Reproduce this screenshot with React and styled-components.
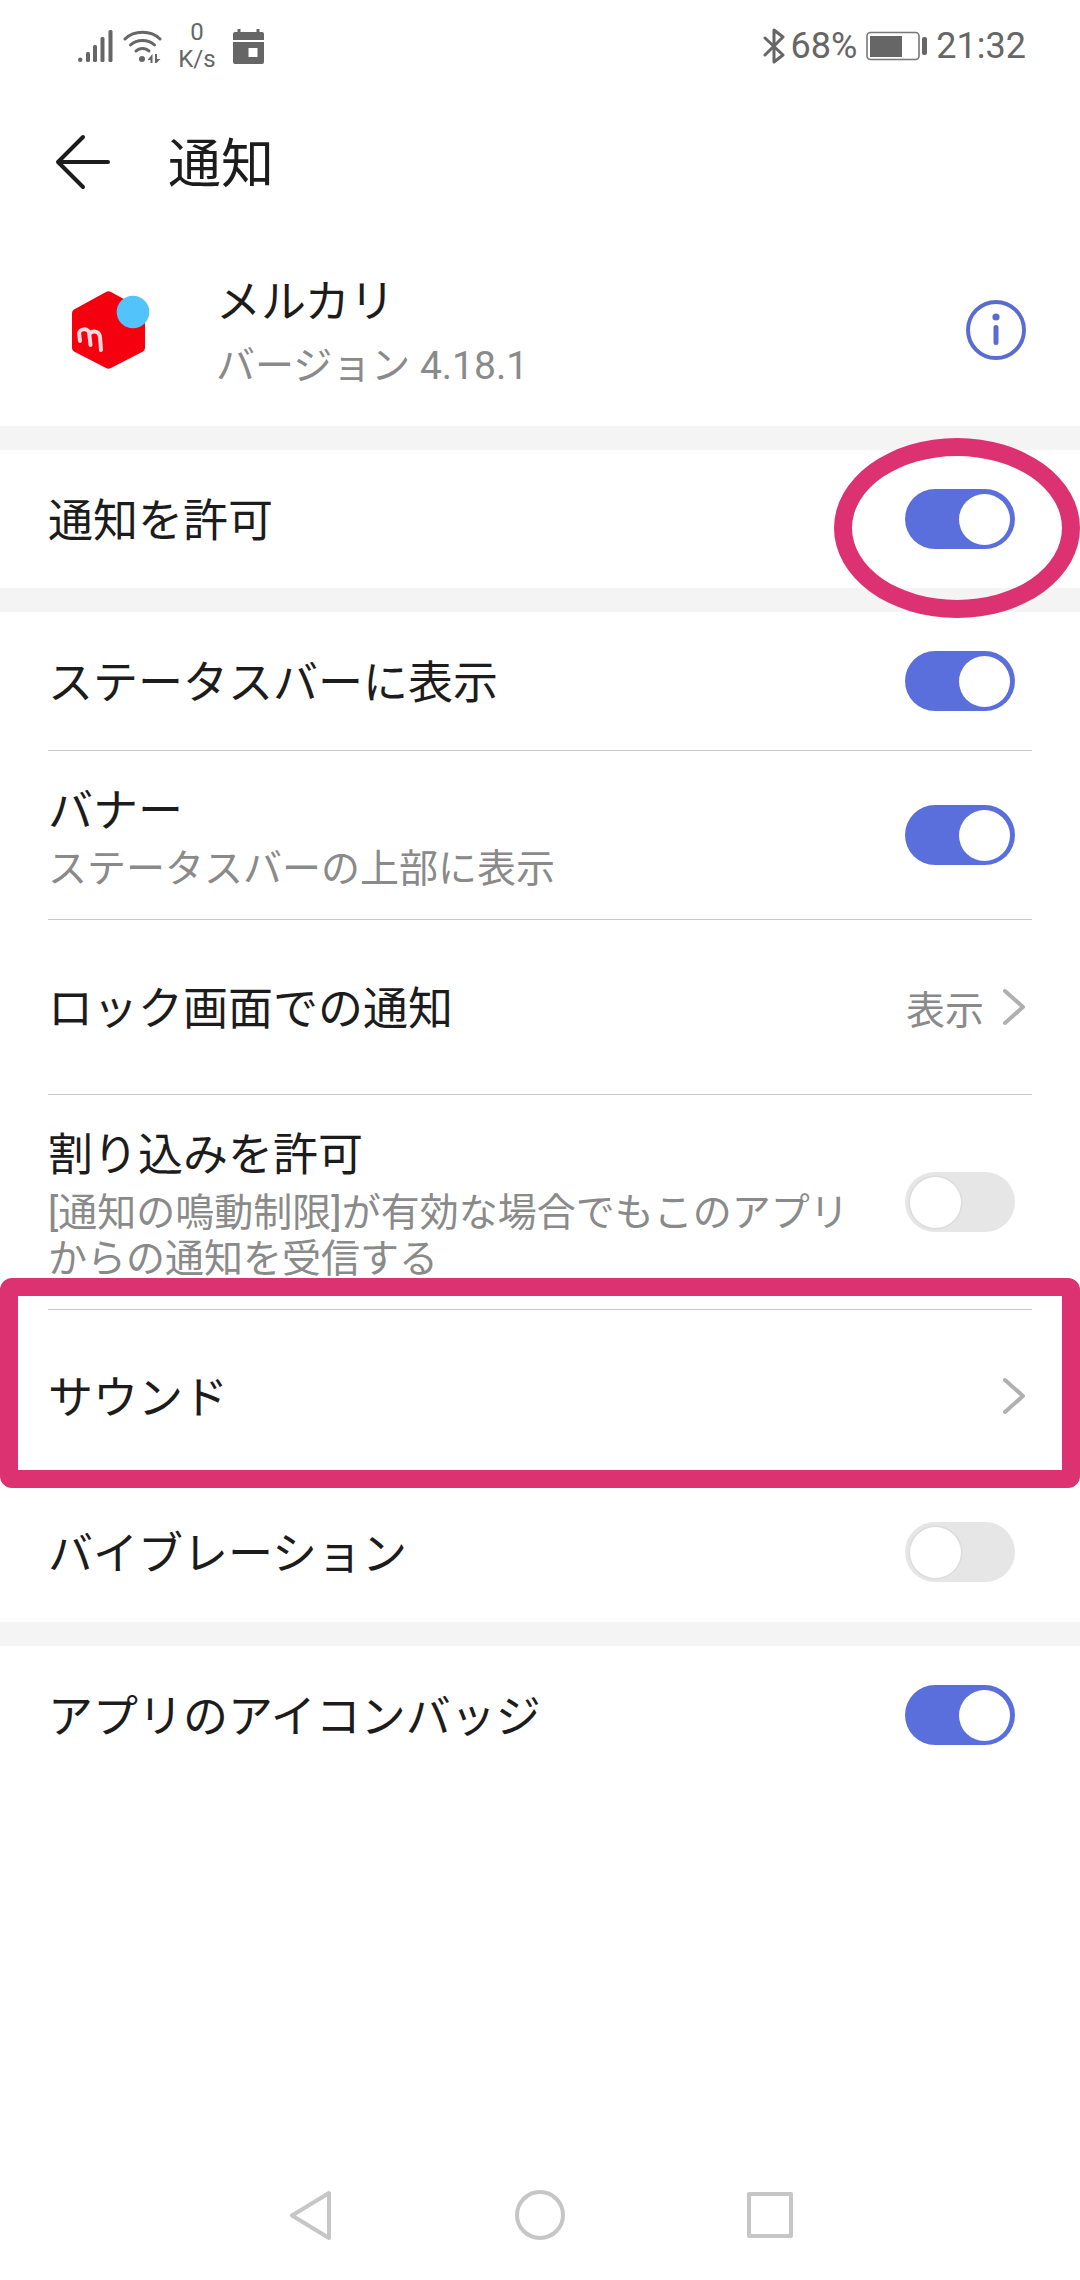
import React from "react";
import styled, { createGlobalStyle } from "styled-components";

const Global = createGlobalStyle`
  html, body { margin: 0; padding: 0; background: #fff; }
  body { font-family: Roboto, "Noto Sans CJK JP", sans-serif; }
`;

const Page = styled.div`
  position: relative;
  width: 1080px;
  height: 2280px;
  overflow: hidden;
  background: #fff;
  display: flex;
  flex-direction: column;
`;

const StatusBar = styled.div`
  height: 80px;
  padding: 12px 54px 0 78px;
  display: flex;
  align-items: center;
  justify-content: space-between;
  box-sizing: border-box;
  flex: none;
`;
const StatusGroup = styled.div`
  display: flex;
  align-items: center;
`;
const WifiWrap = styled.div`
  display: flex;
  margin-left: 10px;
`;
const NetSpeed = styled.div`
  width: 50px;
  margin: 0 11px 0 10px;
  text-align: center;
  font-size: 24px;
  line-height: 27px;
  color: #666;
`;
const Percent = styled.span`
  margin-left: 6px;
  font-size: 36px;
  line-height: 40px;
  color: #666;
`;
const Clock = styled(Percent)`
  margin-left: 9px;
`;
const BatteryWrap = styled.div`
  display: flex;
  margin-left: 9px;
`;

const Toolbar = styled.div`
  height: 164px;
  padding-left: 54px;
  display: flex;
  align-items: center;
  box-sizing: border-box;
  flex: none;
`;
const Title = styled.h1`
  margin: 0 0 0 56px;
  padding-top: 5px;
  font-size: 53px;
  font-weight: 400;
  color: #1c1c1c;
  line-height: 60px;
`;

const AppHeader = styled.div`
  height: 182px;
  padding: 0 54px 10px 72px;
  display: flex;
  align-items: center;
  box-sizing: border-box;
  flex: none;
`;
const AppIcon = styled.div`
  width: 78px;
  height: 78px;
  flex: none;
  margin-right: 66px;
`;
const AppText = styled.div`
  flex: 1;
  padding-top: 4px;
  display: flex;
  flex-direction: column;
  gap: 6px;
`;
const AppName = styled.div`
  font-size: 45px;
  line-height: 62px;
  color: #1c1c1c;
`;
const AppVersion = styled.div`
  font-size: 39px;
  line-height: 52px;
  color: #8a8a8a;
`;

const Band = styled.div`
  height: 24px;
  background: #f4f4f4;
  flex: none;
`;

const Row = styled.div`
  height: ${(p) => p.$h}px;
  padding: 0 48px;
  display: flex;
  align-items: center;
  justify-content: space-between;
  box-sizing: border-box;
  flex: none;
`;
const Divider = styled.div`
  height: 1px;
  margin: 0 48px;
  background: #c8c8c8;
  flex: none;
`;
const RowText = styled.div`
  padding-top: 4px;
  display: flex;
  flex-direction: column;
  gap: 5px;
  width: ${(p) => p.$w || "auto"};
`;
const Label = styled.div`
  font-size: 45px;
  line-height: 58px;
  color: #1c1c1c;
  white-space: nowrap;
`;
const SingleLabel = styled(Label)`
  padding-top: 6px;
`;
const Sub = styled.div`
  font-size: 39px;
  line-height: 46px;
  color: #8a8a8a;
`;
const Track = styled.div`
  width: 110px;
  height: 60px;
  margin-right: 17px;
  border-radius: 30px;
  flex: none;
  box-sizing: border-box;
  padding: 4.5px 5px;
  display: flex;
  justify-content: ${(p) => (p.$on ? "flex-end" : "flex-start")};
  background: ${(p) => (p.$on ? "#5a6fdc" : "#e6e6e6")};
`;
const Knob = styled.div`
  width: 51px;
  height: 51px;
  border-radius: 50%;
  background: #fff;
  box-shadow: ${(p) => (p.$on ? "none" : "0 0 0 1.5px #dcdcdc")};
`;
const Trail = styled.div`
  display: flex;
  align-items: center;
  gap: 18px;
  font-size: 39px;
  color: #8a8a8a;
  margin-right: 4px;
`;

const Spacer = styled.div`
  flex: 1;
`;
const NavBar = styled.div`
  height: 130px;
  display: flex;
  align-items: center;
  justify-content: center;
  box-sizing: border-box;
  flex: none;
`;
const NavSlot = styled.div`
  width: 230px;
  display: flex;
  justify-content: center;
`;

const RingNote = styled.div`
  position: absolute;
  left: 834px;
  top: 438px;
  width: 246px;
  height: 180px;
  box-sizing: border-box;
  border: 18px solid #dc3272;
  border-radius: 50%;
`;
const BoxNote = styled.div`
  position: absolute;
  left: 0;
  top: 1278px;
  width: 1080px;
  height: 210px;
  box-sizing: border-box;
  border: 18px solid #dc3272;
  border-radius: 12px;
`;

const Chevron = () => (
  <svg width="26" height="38" viewBox="0 0 26 38" fill="none">
    <path d="M3 3l18 16L3 35" stroke="#b0b0b0" strokeWidth="4" strokeLinecap="round" strokeLinejoin="round" />
  </svg>
);

const Toggle = ({ on }) => (
  <Track $on={on}>
    <Knob $on={on} />
  </Track>
);

export default function App() {
  return (
    <Page>
      <Global />
      <StatusBar>
        <StatusGroup>
          <svg width="35" height="33" viewBox="0 0 35 33" fill="#666">
            <circle cx="2.2" cy="29.8" r="2.2" />
            <rect x="8" y="22" width="4" height="10" rx="1.5" />
            <rect x="15" y="15" width="4" height="17" rx="1.5" />
            <rect x="22.5" y="7" width="4" height="25" rx="1.5" />
            <rect x="30.5" y="0" width="4" height="32" rx="1.5" />
          </svg>
          <WifiWrap>
            <svg width="39" height="33" viewBox="0 0 39 33" fill="none" stroke="#666" strokeWidth="3" strokeLinecap="round">
              <path d="M2 9C11 0 28 0 37 9" />
              <path d="M7.5 15C14 9 25 9 31.5 15" />
              <path d="M13 21C16.5 17.5 22.500 17.5 26 21" />
              <circle cx="19" cy="29" r="3" fill="#666" stroke="none" />
              <path d="M29.500 24v9h-2v-3h-3zM32 24v9h1.500l4-4h-3.500v-5z" fill="#666" stroke="none" />
            </svg>
          </WifiWrap>
          <NetSpeed>0<br />K/s</NetSpeed>
          <svg width="31" height="35" viewBox="0 0 31 35" fill="#666">
            <path d="M2 3h2.500V0h3v3h16V0h3v3H29a2 2 0 0 1 2 2v6H0V5a2 2 0 0 1 2-2z" />
            <path fillRule="evenodd" d="M0 13h31v20a2 2 0 0 1-2 2H2a2 2 0 0 1-2-2zM15.500 19v9h9v-9z" />
          </svg>
        </StatusGroup>
        <StatusGroup>
          <svg width="22" height="36" viewBox="0 0 22 36" fill="none" stroke="#666" strokeWidth="3" strokeLinecap="round" strokeLinejoin="round">
            <path d="M2 10l18 17-9 7V2l9 7L2 27" />
          </svg>
          <Percent>68%</Percent>
          <BatteryWrap>
            <svg width="61" height="30" viewBox="0 0 61 30" fill="none">
              <rect x="1" y="1.500" width="52" height="27" rx="3.500" stroke="#777" strokeWidth="1.600" />
              <rect x="4" y="5" width="32" height="21" fill="#666" />
              <rect x="56" y="6" width="5" height="18" rx="2" fill="#666" />
            </svg>
          </BatteryWrap>
          <Clock>21:32</Clock>
        </StatusGroup>
      </StatusBar>

      <Toolbar>
        <svg width="58" height="58" viewBox="0 0 58 58" fill="none" stroke="#1c1c1c" strokeWidth="4" strokeLinecap="round" strokeLinejoin="round">
          <path d="M54 29H4M29 4L4 29l25 25" />
        </svg>
        <Title>通知</Title>
      </Toolbar>

      <AppHeader>
        <AppIcon>
          <svg width="78" height="78" viewBox="0 0 78 78">
            <path d="M34 1L2 18.500a4 4 0 0 0-2 3.500V57a4 4 0 0 0 2 3.500L34 77a5 5 0 0 0 5 0l32-16.500a4 4 0 0 0 2-3.500V22a4 4 0 0 0-2-3.500L39 1a5 5 0 0 0-5 0z" fill="#f5000f" />
            <path d="M8 50l-.8-7c-.6-5 8.800-7 10-1l1.300 12M17.500 44c.5-5 9.500-5 10.500 2l1 13" fill="none" stroke="#fff" strokeOpacity=".85" strokeWidth="4" strokeLinecap="round" />
            <circle cx="61" cy="21" r="16.300" fill="#52c3fb" />
          </svg>
        </AppIcon>
        <AppText>
          <AppName>メルカリ</AppName>
          <AppVersion>バージョン 4.18.1</AppVersion>
        </AppText>
        <svg width="60" height="60" viewBox="0 0 60 60" fill="none">
          <circle cx="30" cy="30" r="28" stroke="#5a6ccf" strokeWidth="4" />
          <circle cx="30" cy="17" r="3.600" fill="#5a6ccf" />
          <rect x="27.500" y="25" width="5" height="20" rx="2.500" fill="#5a6ccf" />
        </svg>
      </AppHeader>

      <Band />
      <Row $h={138}>
        <SingleLabel>通知を許可</SingleLabel>
        <Toggle on />
      </Row>
      <Band />

      <Row $h={138}>
        <SingleLabel>ステータスバーに表示</SingleLabel>
        <Toggle on />
      </Row>
      <Divider />
      <Row $h={168}>
        <RowText>
          <Label>バナー</Label>
          <Sub>ステータスバーの上部に表示</Sub>
        </RowText>
        <Toggle on />
      </Row>
      <Divider />
      <Row $h={174}>
        <SingleLabel>ロック画面での通知</SingleLabel>
        <Trail>表示<Chevron /></Trail>
      </Row>
      <Divider />
      <Row $h={214}>
        <RowText $w="820px">
          <Label>割り込みを許可</Label>
          <Sub>[通知の鳴動制限]が有効な場合でもこのアプリからの通知を受信する</Sub>
        </RowText>
        <Toggle />
      </Row>
      <Divider />
      <Row $h={172}>
        <SingleLabel>サウンド</SingleLabel>
        <Trail><Chevron /></Trail>
      </Row>
      <Row $h={140}>
        <SingleLabel>バイブレーション</SingleLabel>
        <Toggle />
      </Row>
      <Band />
      <Row $h={138}>
        <SingleLabel>アプリのアイコンバッジ</SingleLabel>
        <Toggle on />
      </Row>

      <Spacer />
      <NavBar>
        <NavSlot>
          <svg width="43" height="51" viewBox="0 0 43 51" fill="none" stroke="#c6c6c6" strokeWidth="4" strokeLinejoin="round">
            <path d="M40 3v45L3 25.500z" />
          </svg>
        </NavSlot>
        <NavSlot>
          <svg width="50" height="50" viewBox="0 0 50 50" fill="none" stroke="#c6c6c6" strokeWidth="4">
            <circle cx="25" cy="25" r="23" />
          </svg>
        </NavSlot>
        <NavSlot>
          <svg width="46" height="46" viewBox="0 0 46 46" fill="none" stroke="#c6c6c6" strokeWidth="4" strokeLinejoin="round">
            <rect x="2" y="2" width="42" height="42" />
          </svg>
        </NavSlot>
      </NavBar>

      <RingNote />
      <BoxNote />
    </Page>
  );
}
